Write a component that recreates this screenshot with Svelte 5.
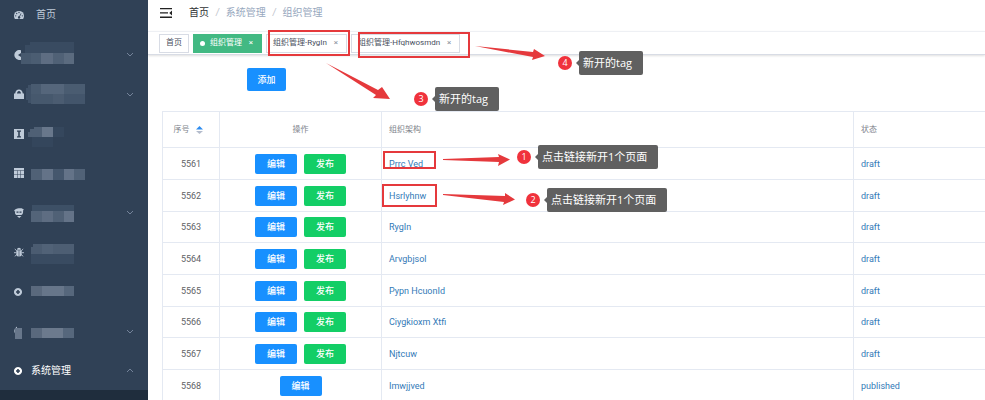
<script lang="ts">
  // tiles: x, y, width, height, color
  const menu = [
    { icon: "gauge", title: "首页" },
    {
      icon: "cut",
      arrow: true,
      tiles: [
        [10, 7, 44, 11, "#394b61"], [5, 10, 6, 8, "#394b61"],
        [1, 18, 10, 11, "#47596e"], [11, 18, 10, 11, "#4b5d72"], [21, 18, 12, 11, "#5e6d82"],
        [33, 18, 11, 11, "#506176"], [44, 18, 10, 11, "#5b6b7f"],
      ],
    },
    {
      icon: "lock",
      arrow: true,
      tiles: [
        [8, 11, 4, 18, "#3f5167"], [6, 14, 3, 12, "#3f5167"],
        [11, 10, 10, 10, "#495b70"], [21, 10, 23, 10, "#55667b"], [44, 10, 21, 10, "#4a5c71"],
        [11, 20, 22, 10, "#46586d"], [33, 20, 11, 10, "#4b5c71"], [44, 20, 21, 10, "#43556b"],
      ],
    },
    {
      icon: "info",
      tiles: [
        [8, 18, 4, 5, "#4c5d72"], [10, 15, 12, 8, "#4f6075"], [14, 13, 8, 4, "#4f6075"],
        [22, 13, 11, 10, "#68778b"], [33, 13, 11, 10, "#35475d"], [12, 23, 21, 10, "#34465c"],
      ],
    },
    {
      icon: "grid",
      tiles: [
        [11, 16, 11, 11, "#506176"], [22, 16, 11, 11, "#647388"], [33, 16, 11, 11, "#45576d"],
        [44, 16, 10, 11, "#647388"], [54, 16, 11, 11, "#516277"],
      ],
    },
    {
      icon: "ghost",
      arrow: true,
      tiles: [
        [12, 12, 42, 6, "#3d5066"], [11, 18, 11, 11, "#536479"], [22, 18, 11, 11, "#5e6d82"],
        [33, 18, 11, 11, "#506176"], [44, 18, 10, 11, "#647388"],
      ],
    },
    {
      icon: "bug",
      tiles: [
        [13, 12, 9, 10, "#4b5c71"], [11, 15, 2, 7, "#4b5c71"], [22, 12, 11, 10, "#516277"],
        [33, 12, 21, 10, "#4d5e73"], [11, 22, 43, 10, "#394b61"],
      ],
    },
    {
      icon: "ring",
      tiles: [[11, 14, 11, 10, "#5a697d"], [22, 14, 22, 10, "#67768a"], [44, 14, 10, 10, "#56677c"]],
    },
    {
      icon: "cut",
      arrow: true,
      tiles: [
        [-5, 17, 7, 11, "#68778b"], [-3, 10, 8, 7, "#304156"],
        [11, 17, 11, 10, "#5a697d"], [22, 17, 21, 10, "#6c7a8d"], [43, 17, 11, 10, "#56677c"],
      ],
    },
    { icon: "ring", title: "系统管理", arrow: true, open: true },
  ];

  const tags = [
    { title: "首页" },
    { title: "组织管理", active: true, closable: true },
    { title: "组织管理-RygIn", closable: true },
    { title: "组织管理-Hfqhwosmdn", closable: true },
  ];

  const rows = [
    { id: 5561, name: "Prrc Ved", status: "draft" },
    { id: 5562, name: "Hsrlyhnw", status: "draft" },
    { id: 5563, name: "RygIn", status: "draft" },
    { id: 5564, name: "Arvgbjsol", status: "draft" },
    { id: 5565, name: "Pypn HcuonId", status: "draft" },
    { id: 5566, name: "Ciygkioxm Xtfi", status: "draft" },
    { id: 5567, name: "Njtcuw", status: "draft" },
    { id: 5568, name: "Imwjjved", status: "published" },
  ];

  const notes = [
    { n: 1, x: 517, y: 145, text: "点击链接新开1个页面" },
    { n: 2, x: 526, y: 188, text: "点击链接新开1个页面" },
    { n: 3, x: 414, y: 87, text: "新开的tag" },
    { n: 4, x: 558, y: 51, text: "新开的tag" },
  ];
</script>

{#snippet icon(name)}
  <svg class="icon" viewBox="0 0 10 10" aria-hidden="true">
    {#if name == "gauge"}
      <path d="M5 .9A5 5 0 0 0 0 5.9c0 1.100.3 2.100.9 3h8.200c.6-.9.9-1.900.9-3A5 5 0 0 0 5 .9z" />
      <g fill="#304156">
        <circle cx="1.700" cy="5.800" r=".65" />
        <circle cx="2.700" cy="3.500" r=".65" />
        <circle cx="5" cy="2.500" r=".65" />
        <circle cx="8.300" cy="5.800" r=".65" />
        <path d="M6.900 3.200 7.500 3.500 5.900 6.500A1.200 1.200 0 1 1 5.200 6.200z" />
      </g>
    {:else if name == "cut"}
      <path d="M7 .3A5 5 0 1 0 7 9.700V7L4 5l3-2z" />
    {:else if name == "lock"}
      <path d="M0 4.500h1.200C1.500 1.800 2.900.4 5 .4s3.500 1.400 3.800 4.100H10V10H0zM3 4.500h4C6.800 2.900 6.200 2 5 2S3.200 2.900 3 4.500z" />
    {:else if name == "info"}
      <path fill-rule="evenodd" d="M0 0h10v10H0zM3 1.500v1.200h1.200v4.600H3v1.200h4V7.300H5.800V2.700H7V1.500z" />
    {:else if name == "grid"}
      <path d="M0 0h10v2.200H0zM0 2.700h3v3.200H0zM3.500 2.700h3v3.200h-3zM7 2.700h3v3.200H7zM0 6.500h3V10H0zM3.500 6.500h3V10h-3zM7 6.500h3V10H7z" />
    {:else if name == "ghost"}
      <path fill-rule="evenodd" d="M0 3C1 .9 3.500 0 5.600.3 7.500 0 9 .6 10 1.800L9 2.500c.5 2.200-.4 4-1.700 4.600H2.200C.9 6.300.8 5 1.200 3.600zM2.500 3.500v1.200h2V3.500zM5.500 3.500v1.200h2V3.500zM3 8h4.500L5.200 10z" />
    {:else if name == "bug"}
      <path d="M3 2.700a2 2 0 0 1 4 0zM2.300 3.300h2.400V9.500C3.500 9.400 2.600 8.800 2.300 7.900zM5.300 3.300h2.400v4.600c-.3.9-1.200 1.500-2.400 1.600z" />
      <path fill="none" stroke="currentColor" stroke-width=".9" d="M.8 2 2.600 3.700M9.200 2 7.400 3.700M0 5.700h2.500M10 5.700H7.500M1 9.400 2.700 7.400M9 9.400 7.300 7.400" />
    {:else}
      <path fill-rule="evenodd" d="M4 1a4 4 0 1 0 .01 0zM3.200 3h1.600v1.200H6v1.600H4.800V7H3.200V5.800H2V4.200h1.200z" />
    {/if}
  </svg>
{/snippet}

<div class="app">
  <aside>
    <ul>
      {#each menu as item}
        <li>
          <a href="#menu" class:open={item.open} class:root={item.icon == "gauge"}>
            {@render icon(item.icon)}
            {#if item.title}
              <span>{item.title}</span>
            {:else}
              <svg class="tiles" viewBox="0 0 66 40" aria-hidden="true">
                {#each item.tiles as [x, y, width, height, fill]}
                  <rect {x} {y} {width} {height} {fill} />
                {/each}
              </svg>
            {/if}
            {#if item.arrow}
              <svg class="chevron" viewBox="0 0 8 5" aria-hidden="true">
                <path d={item.open ? "M1 4 4 1l3 3" : "M1 1l3 3 3-3"} />
              </svg>
            {/if}
          </a>
        </li>
      {/each}
    </ul>
  </aside>

  <main>
    <header>
      <button class="toggle" aria-label="menu">
        <svg viewBox="0 0 12 10" aria-hidden="true">
          <path d="M0 0h12v1.300H0zM0 4.300h8v1.300H0zM0 8.600h12v1.300H0zM12 2.600v4.800L9.300 5z" />
        </svg>
      </button>
      <nav>
        <a href="#home">首页</a><i>/</i><span>系统管理</span><i>/</i><span>组织管理</span>
      </nav>
    </header>

    <div class="tags">
      {#each tags as tag}
        <div class="tag" class:active={tag.active}>
          <a href="#tag">{tag.title}</a>
          {#if tag.closable}<button aria-label="close">×</button>{/if}
        </div>
      {/each}
    </div>

    <section>
      <button class="btn add">添加</button>
      <table>
        <thead>
          <tr>
            <th class="id">
              <button class="sort">
                序号
                <svg viewBox="0 0 7 8" aria-hidden="true">
                  <path fill="#2d8cf0" d="M0 3.500 3.500 0 7 3.500z" />
                  <path fill="#b4bccc" d="M0 5h7L3.500 8z" />
                </svg>
              </button>
            </th>
            <th class="actions">操作</th>
            <th>组织架构</th>
            <th class="status">状态</th>
          </tr>
        </thead>
        <tbody>
          {#each rows as row}
            <tr>
              <td class="id">{row.id}</td>
              <td class="actions">
                <div>
                  <button class="btn">编辑</button>
                  {#if row.status == "draft"}
                    <button class="btn publish">发布</button>
                  {/if}
                </div>
              </td>
              <td><a href="#org">{row.name}</a></td>
              <td class="status">{row.status}</td>
            </tr>
          {/each}
        </tbody>
      </table>
    </section>
  </main>

  <svg class="marks" width="700" height="220" aria-hidden="true">
    <g fill="none" stroke="#e5393c" stroke-width="2">
      <rect x="269" y="31" width="80" height="24" />
      <rect x="359" y="33" width="110" height="24" />
      <rect x="384" y="152" width="51" height="16" />
      <rect x="383" y="185" width="53" height="21" />
    </g>
    <g fill="#e5393c">
      <path d="M443 159 499 157 498 154 510 159.500 498 166 499 162 443 160z" />
      <path d="M443 194 505 196 505 193 515 199.500 503 205 504 202 443 195z" />
      <path d="M326 63 378 90 382 87 390 99 373 98 376 95z" />
      <path d="M475 46 533 52 534 49 545 56 532 60 533 57z" />
    </g>
  </svg>
  {#each notes as note}
    <div class="note" style="left: {note.x}px; top: {note.y}px;">
      <b>{note.n}</b>
      <span>{note.text}</span>
    </div>
  {/each}
</div>

<style>
  :global(body) {
    margin: 0;
    overflow: hidden;
  }
  .app {
    position: relative;
    display: flex;
    height: 100vh;
    overflow: hidden;
    background: #fff;
    color: #606266;
    font: 8px/12px "Liberation Sans", "Noto Sans CJK SC", sans-serif;
  }
  a {
    color: inherit;
    text-decoration: none;
  }
  button {
    padding: 0;
    border: 0;
    background: none;
    color: inherit;
    font: inherit;
    cursor: pointer;
  }

  aside {
    flex: 0 0 148px;
    background: #1f2d3d;
    color: #bfcbd9;
  }
  ul {
    margin: -5px 0 0;
    padding: 0;
    list-style: none;
    background: #304156;
  }
  li {
    height: 40px;
  }
  li:nth-child(even) {
    height: 39px;
  }
  li a {
    display: flex;
    align-items: center;
    gap: 7px;
    height: 100%;
    padding: 0 14px;
    font-size: 10px;
  }
  li a.root {
    gap: 12px;
  }
  li a.open {
    color: #fff;
  }
  .icon {
    flex: none;
    width: 10px;
    height: 10px;
    fill: currentColor;
  }
  .tiles {
    flex: none;
    width: 66px;
    height: 40px;
    margin: 0 -20px 0 -11px;
    align-self: flex-start;
    overflow: visible;
  }
  .chevron {
    width: 8px;
    height: 5px;
    margin-left: auto;
    fill: none;
    stroke: #74839a;
  }

  main {
    flex: 1;
    min-width: 0;
  }
  header {
    display: flex;
    align-items: center;
    gap: 17px;
    height: 26px;
    padding: 0 12px 5px;
    font-size: 10px;
  }
  .toggle svg {
    display: block;
    width: 12px;
    height: 10px;
    fill: #222;
  }
  nav {
    color: #97a8be;
  }
  nav a {
    color: #303133;
  }
  nav i {
    margin: 0 7px;
    color: #c0c4cc;
  }

  .tags {
    display: flex;
    align-items: center;
    gap: 4px;
    height: 22px;
    padding: 0 11px;
    border-top: 1px solid #eef0f4;
    border-bottom: 1px solid #d8dce5;
    box-shadow: 0 1px 2px rgba(0, 0, 0, 0.12);
  }
  .tag {
    display: flex;
    align-items: center;
    gap: 5px;
    height: 17px;
    padding: 0 6px;
    border: 1px solid #d8dce5;
    color: #495060;
    font-family: Roboto, "Noto Sans CJK SC", sans-serif;
  }
  .tag button {
    width: 8px;
    color: #8a919c;
  }
  .tag.active {
    border-color: #42b983;
    background: #42b983;
    color: #fff;
  }
  .tag.active button {
    color: #fff;
  }
  .tag.active::before {
    content: "";
    width: 5px;
    height: 5px;
    border-radius: 50%;
    background: #fff;
  }

  section {
    padding: 13px 0 0 14px;
  }
  .btn {
    width: 42px;
    height: 20px;
    border-radius: 2px;
    background: #1890ff;
    color: #fff;
    font-size: 9px;
    font-weight: 500;
  }
  .publish {
    background: #13ce66;
  }
  .add {
    display: block;
    width: 39px;
    height: 23px;
    margin: 0 0 20px 85px;
  }
  table {
    width: 100%;
    table-layout: fixed;
    border-collapse: collapse;
  }
  th,
  td {
    height: 31px;
    padding: 0 7px;
    border: 1px solid #e4e9f2;
    border-bottom: 0;
    text-align: left;
  }
  td {
    font-family: Roboto, "Noto Sans CJK SC", sans-serif;
    font-size: 9px;
  }
  tbody tr:nth-child(3n) td {
    height: 30px;
  }
  th {
    height: 35px;
    color: #80848c;
    font-weight: normal;
  }
  .id {
    width: 42px;
    text-align: center;
  }
  th.id {
    padding: 0 10px 0 4px;
  }
  .actions {
    width: 147px;
    text-align: center;
  }
  .actions div {
    display: flex;
    justify-content: center;
    gap: 7px;
  }
  .status {
    width: 124px;
    padding-right: 0;
    border-right: 0;
  }
  .sort {
    display: inline-flex;
    align-items: center;
    gap: 6px;
  }
  .sort svg {
    width: 7px;
    height: 8px;
  }
  td a,
  td.status {
    color: #337ab7;
  }

  .marks {
    position: absolute;
    top: 0;
    left: 0;
    pointer-events: none;
  }
  .note {
    position: absolute;
    display: flex;
    align-items: center;
    gap: 7px;
    color: #fff;
    font-family: "Open Sans", "Noto Sans CJK SC", sans-serif;
    white-space: nowrap;
  }
  .note b {
    width: 14px;
    height: 14px;
    border-radius: 50%;
    background: #f0323c;
    font-size: 9px;
    font-weight: normal;
    line-height: 14px;
    text-align: center;
  }
  .note span {
    position: relative;
    padding: 0 11px 0 4px;
    border-radius: 2px;
    background: #606060;
    font-size: 11px;
    line-height: 24px;
  }
  .note span::before {
    content: "";
    position: absolute;
    top: 9px;
    left: -3px;
    border: 3px solid transparent;
    border-right-color: #606060;
    border-left: 0;
  }
</style>
